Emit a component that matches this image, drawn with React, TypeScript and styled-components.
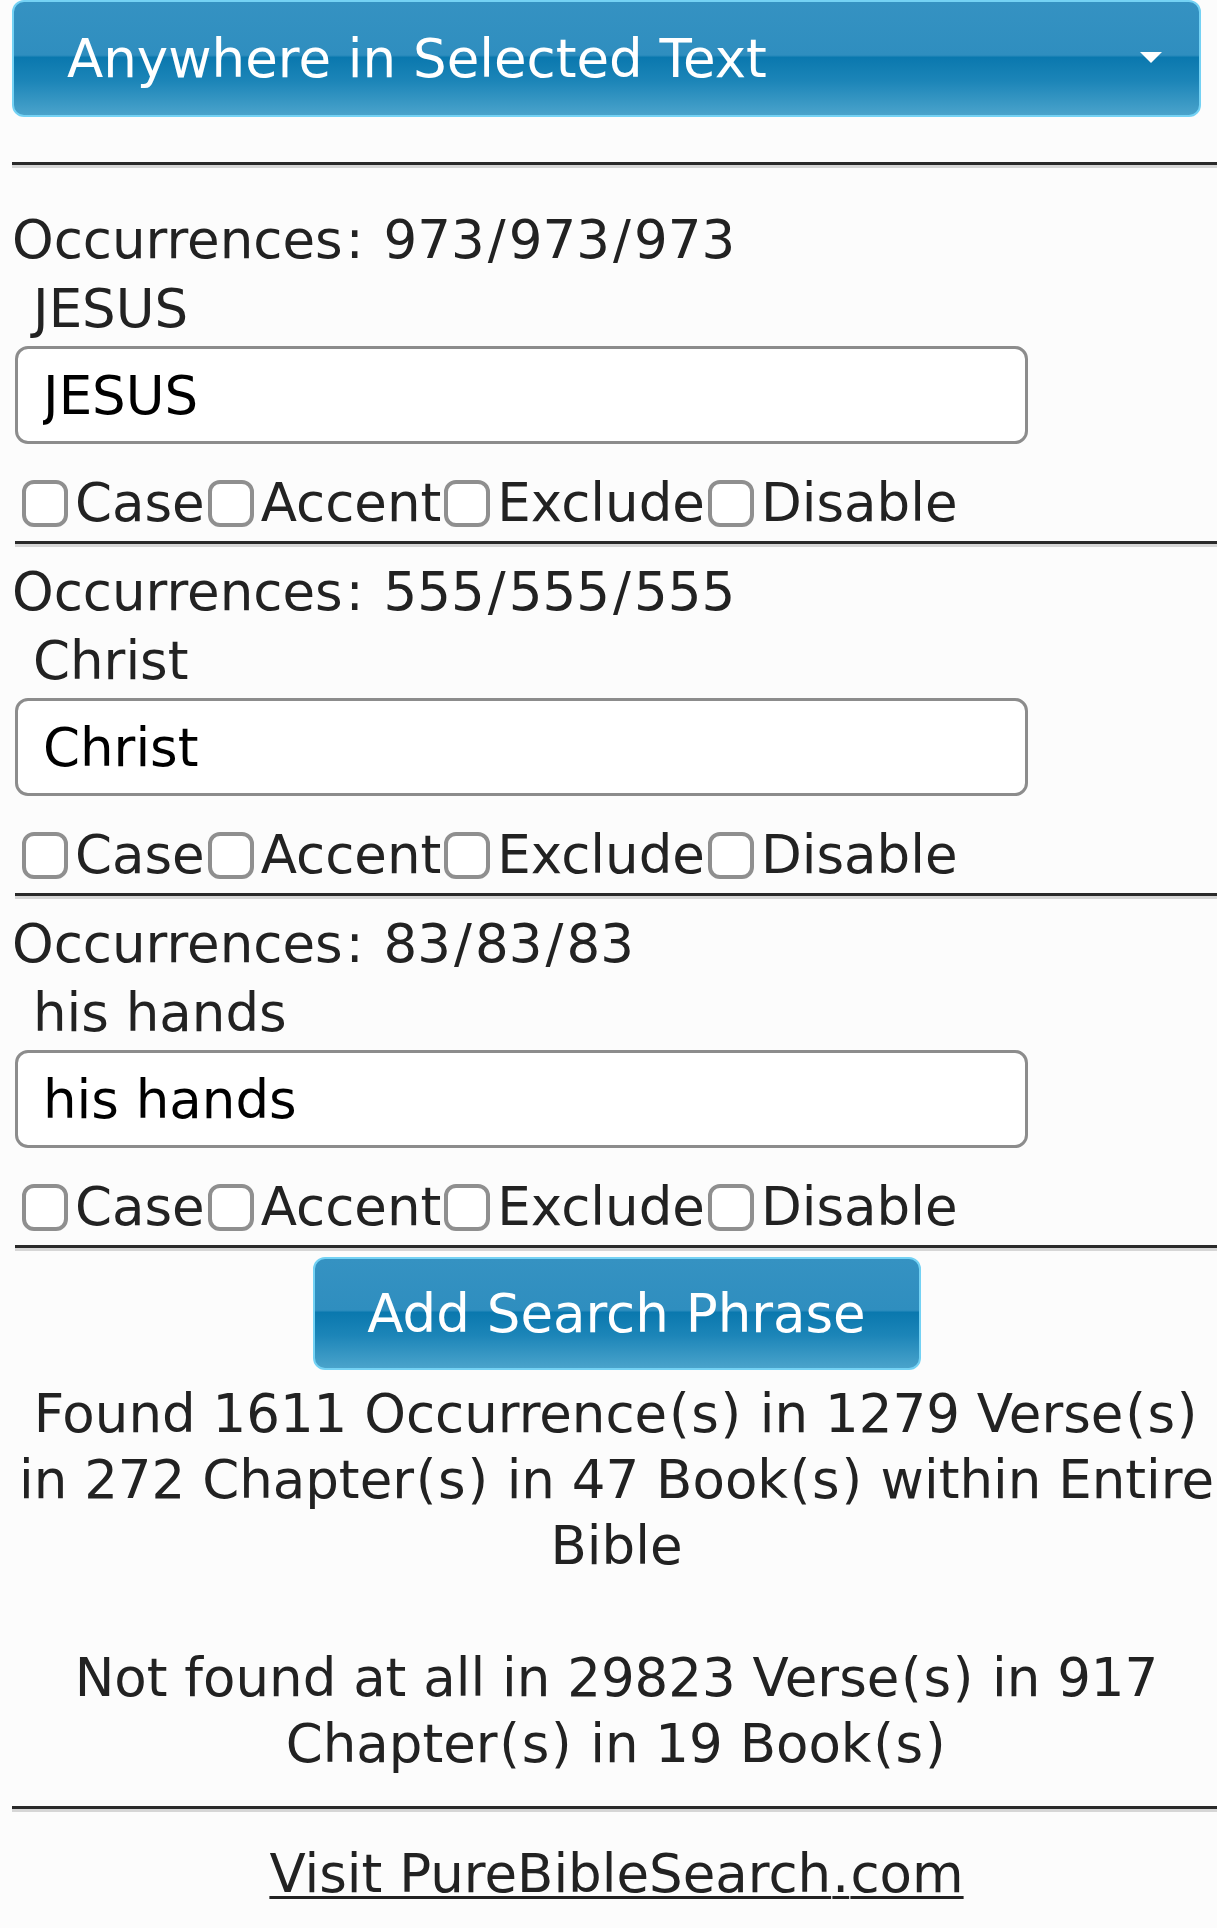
import React, { useState } from 'react';
import styled, { createGlobalStyle } from 'styled-components';

const GlobalStyle = createGlobalStyle`
  html, body {
    margin: 0;
    padding: 0;
    background: #fcfcfc;
    overflow-x: hidden;
  }
  body {
    font-family: 'DejaVu Sans', Verdana, sans-serif;
    font-size: 53px;
    line-height: 66px;
    color: #222;
  }
`;

const Page = styled.div`
  width: 1209px;
  margin-left: 12px;
`;

const GlossyButton = styled.div`
  box-sizing: border-box;
  border: 2px solid #74d2f4;
  border-radius: 12px;
  color: #fff;
  background: linear-gradient(
    to bottom,
    #3592c2 0%,
    #2f8ebf 47%,
    #0a78ae 49%,
    #1c85b8 70%,
    #4aa3cb 100%
  );
  cursor: pointer;
  user-select: none;
`;

const SelectBox = styled(GlossyButton)`
  height: 117px;
  margin-right: 20px;
  padding: 0 37px 0 53px;
  display: flex;
  align-items: center;
  justify-content: space-between;
`;

const Caret = styled.span`
  width: 0;
  height: 0;
  border-left: 11px solid transparent;
  border-right: 11px solid transparent;
  border-top: 11px solid #fff;
  margin-top: -2px;
`;

/* the original page is set in Verdana, whose punctuation is wider than DejaVu's */
const Punct = styled.span<{ $extra: number }>`
  padding: 0 ${p => p.$extra / 2}px;
`;

const extraWidth: Record<string, number> = {
  ':': 6.2,
  '/': 6.2,
  '(': 3.4,
  ')': 3.4,
  '.': 2.4,
};

function Txt({ children }: { children: string }) {
  return (
    <>
      {children.split(/([:/().])/).map((part, i) =>
        extraWidth[part] ? (
          <Punct key={i} $extra={extraWidth[part]}>
            {part}
          </Punct>
        ) : (
          part
        )
      )}
    </>
  );
}

const Rule = styled.hr<{ $inset?: boolean }>`
  height: 0;
  border: none;
  border-top: 3px solid #2a2a2a;
  border-bottom: 3px solid #d6d6d6;
  margin: 0 0 0 ${p => (p.$inset ? '3px' : '0')};
`;

const TopRule = styled(Rule)`
  margin-top: 45px;
  margin-bottom: 27px;
`;

const Phrase = styled.div`
  padding-top: 12px;
`;

const Occurrences = styled.div`
  white-space: nowrap;
`;

const PhraseLabel = styled.div`
  margin-top: 3px;
  padding-left: 21px;
`;

const PhraseInput = styled.input`
  display: block;
  box-sizing: border-box;
  width: 1013px;
  height: 98px;
  margin: 4px 0 0 3px;
  padding: 0 25px;
  border: 3px solid #8c8c8c;
  border-radius: 13px;
  background: #fff;
  color: #000;
  font-family: inherit;
  font-size: 53px;
  outline: none;
`;

const OptionRow = styled.div`
  display: flex;
  align-items: center;
  margin-top: 26px;
  padding-left: 7px;
  white-space: nowrap;
`;

const Option = styled.label`
  display: inline-flex;
  align-items: center;
  cursor: pointer;
`;

const Box = styled.input`
  appearance: none;
  -webkit-appearance: none;
  box-sizing: border-box;
  width: 46px;
  height: 47px;
  margin: 0 7px 0 3px;
  border: 4px solid #8f8f8f;
  border-radius: 12px;
  background: #fff;
  cursor: pointer;

  &:checked {
    background: #3592c2;
    border-color: #2a7fae;
  }
`;

const PhraseRule = styled(Rule)`
  margin-top: 5px;
`;

const AddButton = styled(GlossyButton)`
  width: 608px;
  height: 113px;
  margin: 6px auto 0;
  display: flex;
  align-items: center;
  justify-content: center;
`;

const Summary = styled.div`
  margin-top: 11px;
  text-align: center;
`;

const SummaryLine = styled.div`
  min-height: 66px;
  white-space: nowrap;
`;

const BottomRule = styled(Rule)`
  margin-top: 29px;
`;

const Footer = styled.div`
  margin-top: 29px;
  text-align: center;
`;

const SiteLink = styled.a`
  color: #222;
  text-decoration: underline;
  text-decoration-thickness: 3px;
  text-underline-offset: 4px;
`;

const phrases = [
  { count: '973/973/973', text: 'JESUS' },
  { count: '555/555/555', text: 'Christ' },
  { count: '83/83/83', text: 'his hands' },
];

const options = ['Case', 'Accent', 'Exclude', 'Disable'];

const summaryLines = [
  'Found 1611 Occurrence(s) in 1279 Verse(s)',
  'in 272 Chapter(s) in 47 Book(s) within Entire',
  'Bible',
  '',
  'Not found at all in 29823 Verse(s) in 917',
  'Chapter(s) in 19 Book(s)',
];

function App() {
  const [values, setValues] = useState(phrases.map(p => p.text));

  return (
    <Page>
      <GlobalStyle />
      <SelectBox>
        <span>Anywhere in Selected Text</span>
        <Caret />
      </SelectBox>

      <TopRule />

      {phrases.map((phrase, i) => (
        <Phrase key={phrase.text}>
          <Occurrences>
            <Txt>{`Occurrences: ${phrase.count}`}</Txt>
          </Occurrences>
          <PhraseLabel>{phrase.text}</PhraseLabel>
          <PhraseInput
            value={values[i]}
            onChange={e => {
              const next = [...values];
              next[i] = e.target.value;
              setValues(next);
            }}
          />
          <OptionRow>
            {options.map(opt => (
              <Option key={opt}>
                <Box type="checkbox" />
                {opt}
              </Option>
            ))}
          </OptionRow>
          <PhraseRule $inset />
        </Phrase>
      ))}

      <AddButton>Add Search Phrase</AddButton>

      <Summary>
        {summaryLines.map((line, i) => (
          <SummaryLine key={i}>
            <Txt>{line}</Txt>
          </SummaryLine>
        ))}
      </Summary>

      <BottomRule />

      <Footer>
        <SiteLink href="#">
          <Txt>Visit PureBibleSearch.com</Txt>
        </SiteLink>
      </Footer>
    </Page>
  );
}

export default App;
